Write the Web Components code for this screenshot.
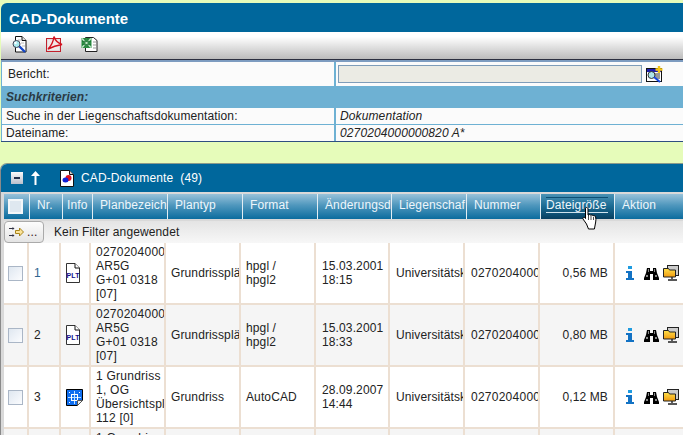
<!DOCTYPE html>
<html>
<head>
<meta charset="utf-8">
<title>CAD-Dokumente</title>
<style>
html, body { margin: 0; height: 100%; overflow: hidden; background: #e6fcba; }
body { font: 12px/14px "Liberation Sans", Arial, sans-serif; letter-spacing: .12px; color: #222; }
span[slot=plan], span[slot=num] { letter-spacing: .25px; }
</style>
</head>
<body>
<cad-title>CAD-Dokumente</cad-title>
<cad-toolbar>
  <cad-icon name="docsearch"></cad-icon>
  <cad-icon name="pdf"></cad-icon>
  <cad-icon name="excel"></cad-icon>
</cad-toolbar>
<cad-criteria>
  <cad-field kind="report" label="Bericht:">
    <cad-input></cad-input>
    <cad-icon name="report"></cad-icon>
  </cad-field>
  <cad-band>Suchkriterien:</cad-band>
  <cad-field label="Suche in der Liegenschaftsdokumentation:"><i>Dokumentation</i></cad-field>
  <cad-field label="Dateiname:"><i>0270204000000820 A*</i></cad-field>
</cad-criteria>
<cad-panel count="(49)">
  CAD-Dokumente
  <cad-head slot="grid"></cad-head>
  <cad-filter slot="grid">Kein Filter angewendet</cad-filter>
  <cad-row slot="grid" nr="1" icon="plt" nrcolor="#2f6590">
    <span slot="plan">0270204000<br>AR5G<br>G+01 0318<br>[07]</span>
    <span slot="typ">Grundrissplä</span>
    <span slot="format">hpgl /<br>hpgl2</span>
    <span slot="date">15.03.2001<br>18:15</span>
    <span slot="area">Universitätsk</span>
    <span slot="num">0270204000</span>
    <span slot="size">0,56 MB</span>
  </cad-row>
  <cad-row slot="grid" nr="2" icon="plt" alt>
    <span slot="plan">0270204000<br>AR5G<br>G+01 0318<br>[07]</span>
    <span slot="typ">Grundrissplä</span>
    <span slot="format">hpgl /<br>hpgl2</span>
    <span slot="date">15.03.2001<br>18:33</span>
    <span slot="area">Universitätsk</span>
    <span slot="num">0270204000</span>
    <span slot="size">0,80 MB</span>
  </cad-row>
  <cad-row slot="grid" nr="3" icon="dwg">
    <span slot="plan">1 Grundriss<br>1, OG<br>Übersichtspl<br>112 [0]</span>
    <span slot="typ">Grundriss</span>
    <span slot="format">AutoCAD</span>
    <span slot="date">28.09.2007<br>14:44</span>
    <span slot="area">Universitätsk</span>
    <span slot="num">0270204000</span>
    <span slot="size">0,12 MB</span>
  </cad-row>
  <cad-row slot="grid" top alt>
    <span slot="plan">1 Grundriss</span>
  </cad-row>
</cad-panel>
<script>
const ICONS = {
  docsearch: `<svg width="16" height="17" viewBox="0 0 16 17"><path d="M3.500.5h6.500l4 4v11.500h-10.500z" fill="#fff" stroke="#111"/><path d="M10 .5v4h4" fill="#ddd" stroke="#111"/><path d="M6 4h3M9 7h3M10 10h3" stroke="#bbb"/><path d="M7 10l6 6" stroke="#1446c8" stroke-width="2.400"/><circle cx="4.500" cy="8" r="3.500" fill="#a9eaf0" stroke="#445"/><circle cx="3.500" cy="7" r="1.200" fill="#fff"/></svg>`,
  pdf: `<svg width="17" height="17" viewBox="0 0 17 17"><rect x=".5" y="2.500" width="14" height="13" fill="#ddd" stroke="#c2202c"/><path d="M2 4h11v10H2z" fill="#f2e8e8"/><path d="M8 .5c-.5 4-2.500 9-6 12.500 4-2 8-3.500 14-4.500-3-1-6.500-3-8-8z" fill="none" stroke="#d3101e" stroke-width="1.400"/></svg>`,
  excel: `<svg width="17" height="17" viewBox="0 0 17 17"><path d="M4.500 1.500h8l3.500 3v11h-11.500z" fill="#fff" stroke="#222"/><path d="M12 6h3M12 9h3M12 12h3" stroke="#999"/><rect x=".5" y="2" width="10" height="10" fill="#2d8f45"/><path d="M1 2.500l9 9M10 2.500l-9 9" stroke="#bfe5c4" stroke-width="1.500"/><path d="M1 5.500h9M1 8.500h9M4 2v9M7 2v9" stroke="#166a2c" stroke-width=".6"/></svg>`,
  report: `<svg width="18" height="17" viewBox="0 0 18 17"><rect x=".5" y="2.500" width="15" height="13" fill="#fff" stroke="#111"/><rect x="1" y="3" width="14" height="3" fill="#1c1cb0"/><path d="M8 8h6M9 10h5M10 12h4" stroke="#333"/><circle cx="5.500" cy="9" r="3.500" fill="#aee6ec" stroke="#333"/><path d="M8 11l6 5" stroke="#1446e0" stroke-width="2"/><path d="M13 0v7M9.500 3.500h7" stroke="#f5c518" stroke-width="2.400"/></svg>`,
  minus: `<svg width="12" height="12" viewBox="0 0 12 12"><defs><linearGradient id="m" x1="0" y1="0" x2="0" y2="1"><stop offset="0" stop-color="#fafafa"/><stop offset="1" stop-color="#b9c0cc"/></linearGradient></defs><rect width="12" height="12" fill="url(#m)"/><rect x="3" y="5" width="6" height="2" fill="#23304a"/></svg>`,
  up: `<svg width="9" height="14" viewBox="0 0 9 14"><path d="M4.500 0L9 5H5.500v9h-2V5H0z" fill="#fff"/></svg>`,
  doc: `<svg width="14" height="17" viewBox="0 0 14 17"><path d="M.5.5h9l4 4v12H.5z" fill="#fff" stroke="#111"/><path d="M9.500.5v4h4" fill="#ccc" stroke="#111"/><circle cx="8.500" cy="8" r="3" fill="#e01020"/><ellipse cx="5.500" cy="10" rx="3" ry="2.500" fill="#1020d8"/></svg>`,
  plt: `<svg width="14" height="20" viewBox="0 0 14 20"><path d="M.5.5h8.500l4.500 4.500v14.500H.5z" fill="#fff" stroke="#333"/><path d="M9 .5v4.500h4.500" fill="#fff" stroke="#111"/><text x="7" y="15" text-anchor="middle" font-family="Liberation Sans, Arial, sans-serif" font-size="7" font-weight="700" fill="#10108c">PLT</text></svg>`,
  dwg: `<svg width="17" height="17" viewBox="0 0 17 17"><path d="M.5.5h16v11l-5 5H.5z" fill="#0f6ef0" stroke="#000"/><path d="M2 8.500h13M8.500 2v13" stroke="#bfe0ff" fill="none"/><rect x="5.500" y="5.500" width="6" height="6" fill="none" stroke="#fff"/><path d="M3 3h1v1H3zM13 3h1v1h-1zM3 13h1v1H3z" fill="#fff"/><path d="M16.500 11.500h-5v5z" fill="#eee" stroke="#555"/></svg>`,
  info: `<svg width="8" height="14" viewBox="0 0 8 14"><rect x="2" y="0" width="4" height="3" fill="#1e9be0"/><path d="M0 5h6v7h2v2H0v-2h2V7H0z" fill="#1272c4"/></svg>`,
  binoculars: `<svg width="15" height="13" viewBox="0 0 15 13"><path d="M3 1h3v3h3V1h3l1 5 2 5v2H9V7H6v6H0v-2l2-5z" fill="#000"/><path d="M4 2h1v3H4zM10 2h1v3h-1zM2 8h2v2H2zM11 8h2v2h-2z" fill="#888"/></svg>`,
  folder: `<svg width="16" height="16" viewBox="0 0 16 16"><rect x="4.500" y=".5" width="11" height="10" fill="#ccc" stroke="#222"/><defs><linearGradient id="f" x1="0" y1="0" x2="0" y2="1"><stop offset="0" stop-color="#ffe04a"/><stop offset="1" stop-color="#f09a10"/></linearGradient></defs><path d="M.5 3.500h5l1 1.500h6v7H.5z" fill="url(#f)" stroke="#222"/><path d="M9 12v2M5 15h9" stroke="#222" stroke-width="1.400"/></svg>`,
  filter: `<svg width="15" height="12" viewBox="0 0 15 12"><path d="M0 2.500h5M0 9.500h5" stroke="#334"/><path d="M3.500 1l2 1.500-2 1.500zM3.500 8l2 1.500-2 1.500z" fill="#334"/><path d="M6.500 4.500h4V2l4 4-4 4V7.500h-4z" fill="#fbe39a" stroke="#a8841a"/></svg>`,
  hand: `<svg width="17" height="23" viewBox="0 0 17 23"><path d="M4.500.5c1 0 1.500.7 1.500 1.500v6h.5c.8-.8 2-.5 2.300.4.8-.7 2-.4 2.300.5.8-.6 2.200-.2 2.500 1.100.3 1.700.5 3 .1 5l-1.300 7H6.500L4.500 17 1 12c-.5-1 .5-2 1.500-1.500l1 1V2c0-1 .2-1.500 1-1.500z" fill="#fff" stroke="#000"/><path d="M6.500 8v5M9 9v4M11.500 10v3" stroke="#000" stroke-width=".7"/></svg>`
};

class CadIcon extends HTMLElement {
  connectedCallback() {
    const root = this.attachShadow({ mode: "open" });
    root.innerHTML = `<style>:host{display:inline-flex;line-height:0;}</style>${ICONS[this.getAttribute("name")] || ""}`;
  }
}

class CadTitle extends HTMLElement {
  connectedCallback() {
    this.attachShadow({ mode: "open" }).innerHTML = `
      <style>
        :host{display:flex;align-items:center;box-sizing:border-box;height:29px;margin:3px 0 0 1px;padding:2px 0 0 8px;
          background:#00679c;color:#fff;font-weight:bold;font-size:15px;letter-spacing:0;border-top-left-radius:6px;}
      </style><slot></slot>`;
  }
}

class CadToolbar extends HTMLElement {
  connectedCallback() {
    this.attachShadow({ mode: "open" }).innerHTML = `
      <style>
        :host{display:flex;align-items:center;gap:18px;box-sizing:border-box;height:28px;margin-left:1px;padding:0 0 3px 11px;
          background:linear-gradient(#fff 0,#fff 18%,#bcbcbc 100%);border-bottom:1px solid #2c3040;}
      </style><slot></slot>`;
  }
}

class CadCriteria extends HTMLElement {
  connectedCallback() {
    this.attachShadow({ mode: "open" }).innerHTML = `
      <style>
        :host{display:flex;flex-direction:column;margin-left:1px;border-top:2px solid #7d9cc0;border-bottom:1px solid #2f4f80;}
      </style><slot></slot>`;
  }
}

class CadField extends HTMLElement {
  connectedCallback() {
    const report = this.getAttribute("kind") === "report";
    this.attachShadow({ mode: "open" }).innerHTML = `
      <style>
        :host{display:grid;grid-template-columns:334px 1fr;background:#fbfbfb;border-left:1px solid #6eb1d3;
          height:${report ? 24 : 16}px;}
        :host(:last-child){height:16px;}
        :host(:not(:last-child):not([kind])){border-bottom:1px solid #6eb1d3;}
        .l{display:flex;align-items:center;padding-left:${report ? 6 : 4}px;border-right:2px solid #6eb1d3;box-sizing:border-box;}
        .v{display:flex;align-items:center;padding-left:4px;gap:4px;}
      </style>
      <div class="l">${this.getAttribute("label")}</div>
      <div class="v"><slot></slot></div>`;
  }
}

class CadInput extends HTMLElement {
  connectedCallback() {
    this.attachShadow({ mode: "open" }).innerHTML = `
      <style>:host{display:block;box-sizing:border-box;width:304px;height:18px;margin-left:-2px;background:#ebebe4;border:1px solid #7f9db9;}</style>`;
  }
}

class CadBand extends HTMLElement {
  connectedCallback() {
    this.attachShadow({ mode: "open" }).innerHTML = `
      <style>
        :host{display:flex;align-items:center;height:22px;padding-left:5px;background:#6eb1d3;color:#2b3a44;font-weight:bold;font-style:italic;}
      </style><slot></slot>`;
  }
}

class CadPanel extends HTMLElement {
  connectedCallback() {
    this.attachShadow({ mode: "open" }).innerHTML = `
      <style>
        :host{display:block;margin-top:21px;border-left:1px solid #8a8a8a;border-top:1px solid #8a9a8a;border-top-left-radius:7px;background:#eee;}
        header{display:flex;align-items:center;height:28px;background:#00679c;color:#fff;border-top-left-radius:6px;padding-left:10px;}
        .up{margin-left:8px;}
        .doc{margin:0 7px 0 20px;}
        .count{margin-left:7px;}
        .grid{padding:2px 0 0 3px;background:#d9d9d9;display:flex;flex-direction:column;}
      </style>
      <header>
        <cad-icon name="minus"></cad-icon>
        <cad-icon class="up" name="up"></cad-icon>
        <cad-icon class="doc" name="doc"></cad-icon>
        <slot></slot><span class="count">${this.getAttribute("count")}</span>
      </header>
      <div class="grid"><slot name="grid"></slot></div>`;
  }
}

class CadHead extends HTMLElement {
  connectedCallback() {
    const cols = [["Nr.", 33, 7], ["Info", 30, 4], ["Planbezeich", 75, 7], ["Plantyp", 75, 7], ["Format", 75, 7], ["Änderungsd", 74, 7],
      ["Liegenschaf", 75, 7], ["Nummer", 74, 7], ["Dateigröße", 74, 7], ["Aktion", 70, 7]];
    this.attachShadow({ mode: "open" }).innerHTML = `
      <style>
        :host{display:flex;position:relative;height:25px;color:#eef6fb;
          background:linear-gradient(#98c2da 0,#4f97bd 45%,#0b6c9e 100%);margin-bottom:2px;}
        div{box-sizing:border-box;flex:none;overflow:hidden;white-space:nowrap;border-right:1px solid #e3eef4;padding-top:4px;}
        .chk{width:26px;padding:5px 0 0 4px;}
        .chk b{display:block;box-sizing:border-box;width:15px;height:15px;background:#dfe8f0;border:2px solid #f4f7f9;}
        .on{background:linear-gradient(#4a93b6 0,#1a6a92 50%,#073f60 100%);padding:3px 0 0 5px;}
        .on span{display:block;width:62px;height:14px;border-top:1px solid #0c4f74;border-bottom:1px solid #cfe3ee;white-space:nowrap;}
        .hand{position:absolute;left:578px;top:13px;line-height:0;}
      </style>
      <div class="chk"><b></b></div>
      ${cols.map(([t, w, p]) => t === "Dateigröße"
        ? `<div class="on" style="width:${w}px"><span>${t}</span></div>`
        : `<div style="width:${w}px;padding-left:${p}px">${t}</div>`).join("")}
      <cad-icon class="hand" name="hand"></cad-icon>`;
  }
}

class CadFilter extends HTMLElement {
  connectedCallback() {
    this.attachShadow({ mode: "open" }).innerHTML = `
      <style>
        :host{display:flex;align-items:center;height:22px;background:linear-gradient(#e4e4e4,#f7f7f7);}
        button{all:unset;box-sizing:border-box;display:flex;align-items:center;gap:3px;width:40px;height:22px;padding-left:4px;
          border:1px solid #aaa;border-radius:4px;background:linear-gradient(#fdfdfd,#e4e4e4);font:inherit;color:#3a2020;line-height:12px;}
        span{margin-left:10px;}
      </style>
      <button><cad-icon name="filter"></cad-icon>...</button>
      <span><slot></slot></span>`;
  }
}

class CadRow extends HTMLElement {
  connectedCallback() {
    const nr = this.getAttribute("nr") || "";
    const icon = this.getAttribute("icon");
    const top = this.hasAttribute("top");
    const cell = (name, width, pad = 5, extra = "") => `<div class="c ${extra}" style="width:${width}px;padding-left:${pad}px"><span class="t"><slot name="${name}"></slot></span></div>`;
    this.attachShadow({ mode: "open" }).innerHTML = `
      <style>
        :host{display:flex;height:${top ? 6 : 62}px;overflow:hidden;background:${this.hasAttribute("alt") ? "#f5f5f5" : "#fff"};box-sizing:border-box;
          border-bottom:${top ? 0 : 2}px solid #ecdfd2;}
        .c{box-sizing:border-box;flex:none;display:flex;align-items:${top ? "flex-start" : "center"};overflow:hidden;white-space:nowrap;
          border-right:2px solid #ecdfd2;padding-top:${top ? 2 : 0}px;padding-left:5px;}
        .chk{padding-left:4px;}
        .chk b{display:block;box-sizing:border-box;width:15px;height:15px;border:1px solid #aab6c6;background:linear-gradient(135deg,#dfe7f0,#fbfcfe);}
        .size{justify-content:flex-end;padding-right:5px;}
        .act{border:0;padding-left:11px;gap:10px;}
      </style>
      <div class="c chk" style="width:25px">${top ? "" : "<b></b>"}</div>
      <div class="c" style="width:32px;color:${this.getAttribute("nrcolor") || "inherit"}">${nr}</div>
      <div class="c" style="width:30px">${icon ? `<cad-icon name="${icon}"></cad-icon>` : ""}</div>
      ${cell("plan", 75)}${cell("typ", 75)}${cell("format", 75)}${cell("date", 74, 6)}${cell("area", 75, 6)}${cell("num", 75, 6)}${cell("size", 75, 0, "size")}
      <div class="c act" style="width:70px">${top ? "" : `<cad-icon name="info"></cad-icon><cad-icon name="binoculars"></cad-icon><cad-icon name="folder" style="margin-left:-6px"></cad-icon>`}</div>`;
  }
}

customElements.define("cad-icon", CadIcon);
customElements.define("cad-title", CadTitle);
customElements.define("cad-toolbar", CadToolbar);
customElements.define("cad-criteria", CadCriteria);
customElements.define("cad-field", CadField);
customElements.define("cad-input", CadInput);
customElements.define("cad-band", CadBand);
customElements.define("cad-panel", CadPanel);
customElements.define("cad-head", CadHead);
customElements.define("cad-filter", CadFilter);
customElements.define("cad-row", CadRow);
</script>
</body>
</html>
